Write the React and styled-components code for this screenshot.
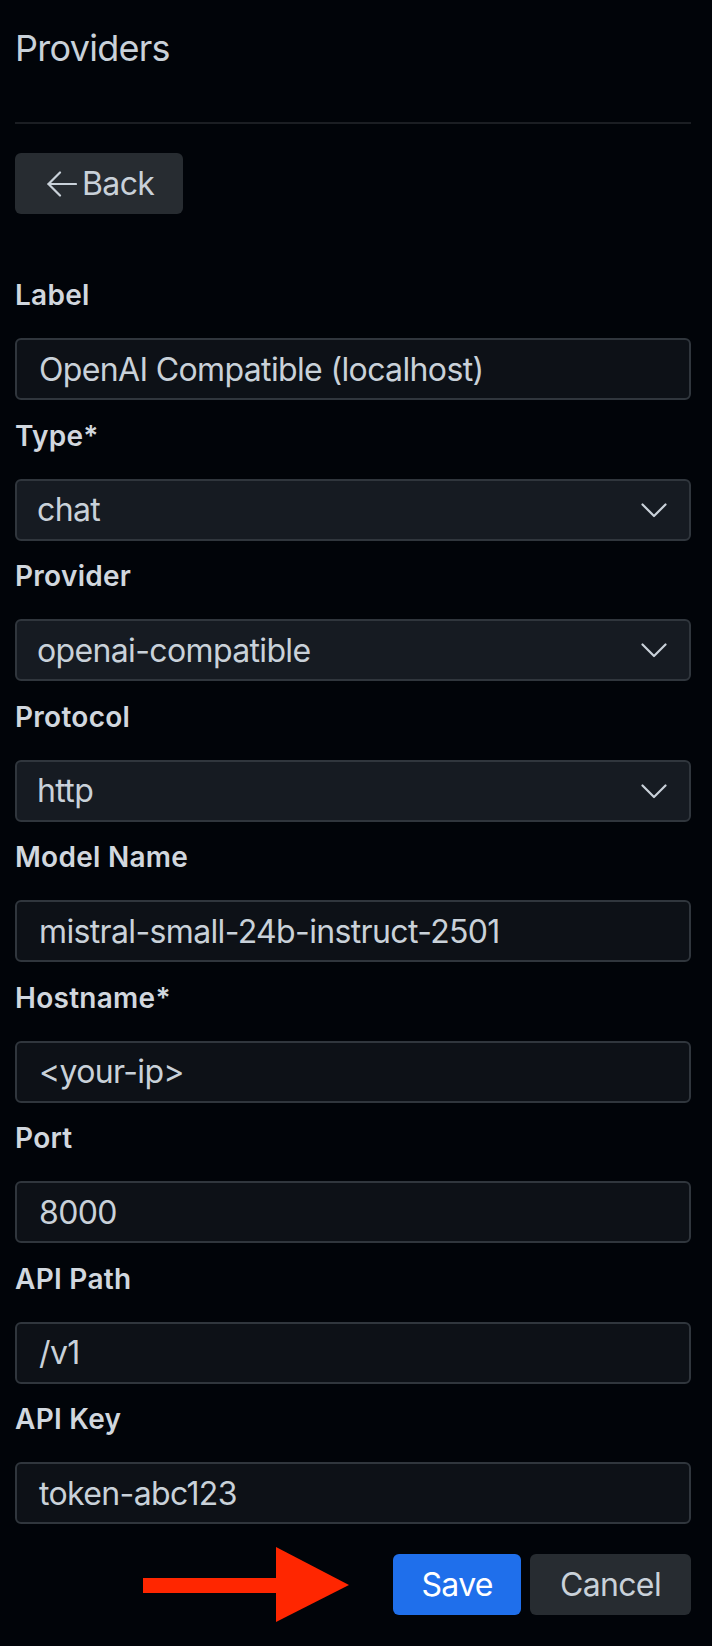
import styled, { createGlobalStyle } from "styled-components";

const GlobalStyle = createGlobalStyle`
  html, body {
    margin: 0;
    padding: 0;
    background: #010409;
  }
  body {
    font-family: Inter, "Noto Sans", sans-serif;
    color: #c9d1d9;
  }
  * {
    box-sizing: border-box;
  }
`;

const Page = styled.div`
  min-height: 1646px;
  padding: 26px 21px 0 15px;
  background: #010409;
`;

const Title = styled.h1`
  margin: 0;
  font-size: 36px;
  line-height: 44px;
  font-weight: 400;
  color: #c9d1d9;
  letter-spacing: -0.02em;
`;

const Divider = styled.hr`
  margin: 52px 0 29px;
  border: none;
  height: 2px;
  background: #1b1e23;
`;

const Button = styled.button`
  display: inline-flex;
  align-items: center;
  justify-content: center;
  gap: 5px;
  height: 61px;
  padding: ${(p) => p.$pad || "0 30px"};
  border: none;
  border-radius: 6px;
  background: ${(p) => p.$bg || "#272c31"};
  color: ${(p) => p.$color || "#c9d1d9"};
  font-family: Inter, "Noto Sans", sans-serif;
  font-size: 32px;
  letter-spacing: -0.02em;
  cursor: pointer;
`;

const Form = styled.div`
  display: flex;
  flex-direction: column;
  gap: 14.5px;
  margin-top: 60px;
`;

const Field = styled.div`
  display: flex;
  flex-direction: column;
`;

const Label = styled.label`
  height: 42px;
  margin-bottom: 22px;
  font-size: 28px;
  line-height: 42px;
  font-weight: 600;
  color: #d1d7de;
  letter-spacing: 0.01em;
`;

const Box = styled.div`
  position: relative;
  display: flex;
  align-items: center;
  height: 62px;
  padding: 0 ${(p) => (p.$select ? "60px 0 20px" : "22px")};
  border: 2px solid #30363d;
  border-radius: 6px;
  background: ${(p) => (p.$select ? "#161b22" : "#0d1117")};
  font-size: 32px;
  color: #c9d1d9;
  letter-spacing: -0.02em;
`;

const Chevron = styled.svg`
  position: absolute;
  right: 22px;
  top: 50%;
  margin-top: -7px;
`;

const Actions = styled.div`
  display: flex;
  justify-content: flex-end;
  align-items: center;
  gap: 9px;
  margin-top: 23px;
`;

const Pointer = styled.svg`
  margin-right: 35px;
`;

const fields = [
  { label: "Label", value: "OpenAI Compatible (localhost)" },
  { label: "Type*", value: "chat", select: true },
  { label: "Provider", value: "openai-compatible", select: true },
  { label: "Protocol", value: "http", select: true },
  { label: "Model Name", value: "mistral-small-24b-instruct-2501" },
  { label: "Hostname*", value: "<your-ip>" },
  { label: "Port", value: "8000" },
  { label: "API Path", value: "/v1" },
  { label: "API Key", value: "token-abc123" },
];

function App() {
  return (
    <Page>
      <GlobalStyle />
      <Title>Providers</Title>
      <Divider />
      <Button $pad="0 29px 0 32px">
        <svg width="30" height="26" viewBox="0 0 30 26" fill="none" stroke="#c9d1d9" strokeWidth="2.2" strokeLinecap="round" strokeLinejoin="round">
          <path d="M1.5 13H29" />
          <path d="M13 1.5L1.5 13L13 24.5" />
        </svg>
        Back
      </Button>
      <Form>
        {fields.map((f) => (
          <Field key={f.label}>
            <Label>{f.label}</Label>
            <Box $select={f.select}>
              {f.value}
              {f.select && (
                <Chevron width="26" height="15" viewBox="0 0 26 15" fill="none" stroke="#c9d1d9" strokeWidth="2.2" strokeLinecap="round" strokeLinejoin="round">
                  <path d="M1.5 1.5L13 13L24.5 1.5" />
                </Chevron>
              )}
            </Box>
          </Field>
        ))}
      </Form>
      <Actions>
        <Pointer width="206" height="75" viewBox="0 0 206 75">
          <rect x="0" y="31" width="134" height="15" fill="#ff2600" />
          <polygon points="133,0 206,38 133,75" fill="#ff2600" />
        </Pointer>
        <Button $bg="#1f6feb" $color="#ffffff" $pad="0 28px">Save</Button>
        <Button>Cancel</Button>
      </Actions>
    </Page>
  );
}

export default App;
